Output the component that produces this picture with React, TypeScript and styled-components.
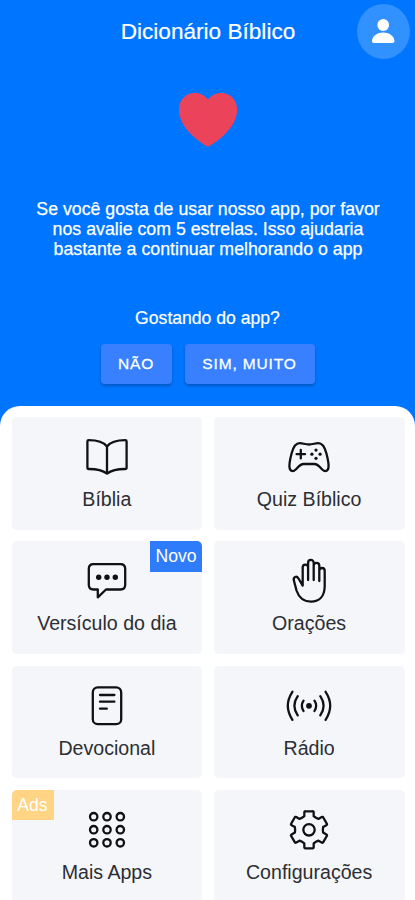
import React from "react";
import styled, { createGlobalStyle } from "styled-components";

const GlobalStyle = createGlobalStyle`
  * { box-sizing: border-box; }
  body { margin: 0; background: #fff; overflow: hidden; }
`;

const Screen = styled.div`
  width: 100%;
  height: 900px;
  overflow: hidden;
  background: #0075ff;
  font-family: "Liberation Sans", Arial, sans-serif;
  color: #fff;
  display: flex;
  flex-direction: column;
`;

const TopBar = styled.header`
  height: 64px;
  flex: none;
  display: grid;
  grid-template-columns: 58px 1fr 58px;
  padding-top: 4px;
`;

const Title = styled.h1`
  grid-column: 2;
  margin: 0;
  padding-left: 1px;
  text-align: center;
  font-size: 22.6px;
  font-weight: 400;
  line-height: 55px;
  -webkit-text-stroke: 0.2px #fff;
`;

const Avatar = styled.button`
  width: 53px;
  height: 55px;
  padding: 0;
  border: 0;
  border-radius: 50%;
  background: #3091ff;
`;

const Hero = styled.section`
  height: 341.5px;
  flex: none;
  display: flex;
  flex-direction: column;
  align-items: center;
  padding-top: 28px;
`;

const HeartIcon = styled.svg`
  width: 60px;
  height: 56px;
  flex: none;
  margin-left: 1px;
`;

const Message = styled.p`
  margin: 51px 0 0 1px;
  width: 361px;
  text-align: center;
  font-size: 17.75px;
  line-height: 20px;
  -webkit-text-stroke: 0.25px #fff;
`;

const Question = styled.p`
  margin: 49px 0 0;
  font-size: 17.6px;
  line-height: 20px;
  -webkit-text-stroke: 0.2px #fff;
`;

const Answers = styled.div`
  display: flex;
  gap: 13px;
  margin-top: 15.5px;
`;

const Answer = styled.button<{ $width: number }>`
  width: ${(p) => p.$width}px;
  height: 40px;
  padding: 0;
  border: 0;
  border-radius: 4px;
  background: #3880ff;
  color: #fff;
  font: 400 15.5px/40px "Liberation Sans", Arial, sans-serif;
  letter-spacing: 0.85px;
  -webkit-text-stroke: 0.3px #fff;
  box-shadow: 0 2px 3px rgba(0, 0, 0, 0.24);
`;

const Panel = styled.main`
  flex: 1;
  min-height: 0;
  background: #fff;
  border-radius: 20px 20px 0 0;
  padding: 11.5px 10.5px 0 11.5px;
`;

const Grid = styled.div`
  display: grid;
  grid-template-columns: 1fr 1fr;
  grid-auto-rows: 112.75px;
  gap: 11.5px;
`;

const Tile = styled.div`
  position: relative;
  overflow: hidden;
  border-radius: 5px;
  background: #f4f6fa;
  display: flex;
  flex-direction: column;
  align-items: center;
  padding-top: 16px;
`;

const Icon = styled.svg`
  width: 48px;
  height: 48px;
  flex: none;
  fill: none;
  stroke: #101114;
  stroke-width: 2.3;
  stroke-linecap: round;
  stroke-linejoin: round;
`;

const Label = styled.span`
  margin-top: 6.2px;
  font-size: 19.6px;
  line-height: 24px;
  color: #2c2e33;
  white-space: nowrap;
`;

const Badge = styled.span<{ $side: "left" | "right" }>`
  position: absolute;
  top: 0;
  ${(p) => p.$side}: 0;
  width: ${(p) => (p.$side === "right" ? 52.5 : 42)}px;
  height: 30.5px;
  text-align: center;
  font-size: 17.6px;
  line-height: 30px;
  color: #fff;
  background: ${(p) => (p.$side === "right" ? "#2f7cfb" : "#ffd485")};
`;

const Solid = styled.g`
  fill: #101114;
  stroke: none;
`;

const gearPath = (() => {
  const at = (r: number, deg: number) => {
    const a = ((deg - 90) * Math.PI) / 180;
    return `${(24 + r * Math.cos(a)).toFixed(2)} ${(23.8 + r * Math.sin(a)).toFixed(2)}`;
  };
  let d = "";
  for (let k = 0; k < 6; k++) {
    const c = k * 60;
    d += `${k ? "L" : "M"}${at(14.4, c - 19)}L${at(18, c - 15)}Q${at(19.3, c - 14)} ${at(18.8, c - 10)}`;
    d += `L${at(18.8, c + 10)}Q${at(19.3, c + 14)} ${at(18, c + 15)}L${at(14.4, c + 19)}Q${at(13.6, c + 30)} ${at(14.4, c + 41)}`;
  }
  return d + "Z";
})();

const Book = () => (
  <Icon viewBox="0 0 48 48">
    <path d="M24 13.5C20.5 9 14 7.2 5.7 7.2Q4.4 7.2 4.4 8.5V34.5Q4.4 36 5.9 36C14 36 19 36.8 24 40.7C29 36.8 34 36 42.1 36Q43.6 36 43.6 34.5V8.5Q43.6 7.2 42.3 7.2C34 7.2 27.5 9 24 13.5V40.7" />
  </Icon>
);

const Gamepad = () => (
  <Icon viewBox="0 0 48 48">
    <path d="M24 11.5C20 11.5 18 10.1 14.7 10.1C10.3 10.1 8.3 14 6.7 20C5.1 26 4.1 31 4.5 34.3C5 38.6 8.2 39 10.7 36.5C13.3 33.9 15 31 18.7 31H29.3C33 31 34.7 33.9 37.3 36.5C39.8 39 43 38.6 43.5 34.3C43.9 31 42.9 26 41.3 20C39.7 14 37.7 10.1 33.3 10.1C30 10.1 28 11.5 24 11.5Z" />
    <path d="M15.8 17V25.4M11.6 21.2H20" />
    <Solid>
      <circle cx="31" cy="17.1" r="1.6" />
      <circle cx="31" cy="25.3" r="1.6" />
      <circle cx="26.9" cy="21.2" r="1.6" />
      <circle cx="35.1" cy="21.2" r="1.6" />
    </Solid>
  </Icon>
);

const Bubble = () => (
  <Icon viewBox="0 0 48 48">
    <path d="M10.5 7.1H37.5Q42.2 7.1 42.2 11.8V27.8Q42.2 32.5 37.5 32.5H23L14.8 40.3V32.5H10.5Q5.8 32.5 5.8 27.8V11.8Q5.8 7.1 10.5 7.1Z" />
    <Solid>
      <circle cx="15.7" cy="20.2" r="2.7" />
      <circle cx="24" cy="20.2" r="2.7" />
      <circle cx="32.3" cy="20.2" r="2.7" />
    </Solid>
  </Icon>
);

const Hand = () => (
  <Icon viewBox="0 0 48 48">
    <path d="M17.7 28.6V10.3a2.7 2.7 0 0 1 5.4 0V23M23.1 10.3V5.7a2.8 2.8 0 0 1 5.6 0V23M28.7 8.6a2.8 2.8 0 0 1 5.6 0V24M34.3 13.7a2.7 2.7 0 0 1 5.4 0V29C39.7 40 33.5 44.6 26 44.6C17.5 44.6 13.5 39.5 11.5 33.5L8.9 23.5C7.9 19.7 11.7 18.5 13.5 21.5L17.7 28.6" />
  </Icon>
);

const Reader = () => (
  <Icon viewBox="0 0 48 48">
    <rect x="9.8" y="5.4" width="28.4" height="36.8" rx="5" />
    <path d="M17 13H31.4M17 19.7H31.4M17 26.7H23.8" />
  </Icon>
);

const Radio = () => (
  <Icon viewBox="0 0 48 48">
    <path d="M18.5 18.6Q15.2 23.8 18.5 29M29.5 18.6Q32.8 23.8 29.5 29M12.7 14.2Q6.1 23.8 12.7 33.4M35.3 14.2Q41.9 23.8 35.3 33.4M7.4 9.8Q-1.8 23.8 7.4 37.8M40.6 9.8Q49.8 23.8 40.6 37.8" />
    <Solid>
      <circle cx="24" cy="23.8" r="2.9" />
    </Solid>
  </Icon>
);

const Apps = () => (
  <Icon viewBox="0 0 48 48">
    {[10.7, 23.7, 36.8].map((y) =>
      [10.7, 24, 37.3].map((x) => <circle key={`${x}-${y}`} cx={x} cy={y} r="3.7" />)
    )}
  </Icon>
);

const Gear = () => (
  <Icon viewBox="0 0 48 48">
    <path d={gearPath} />
    <circle cx="24" cy="23.8" r="5.7" />
  </Icon>
);

type Item = {
  label: string;
  icon: React.ComponentType;
  badge?: { text: string; side: "left" | "right" };
};

const items: Item[] = [
  { label: "Bíblia", icon: Book },
  { label: "Quiz Bíblico", icon: Gamepad },
  { label: "Versículo do dia", icon: Bubble, badge: { text: "Novo", side: "right" } },
  { label: "Orações", icon: Hand },
  { label: "Devocional", icon: Reader },
  { label: "Rádio", icon: Radio },
  { label: "Mais Apps", icon: Apps, badge: { text: "Ads", side: "left" } },
  { label: "Configurações", icon: Gear },
];

export default function App() {
  return (
    <>
      <GlobalStyle />
      <Screen>
        <TopBar>
          <Title>Dicionário Bíblico</Title>
          <Avatar aria-label="Perfil">
            <svg width="53" height="55" viewBox="0 0 53 55" fill="#fff">
              <circle cx="26.2" cy="21" r="5.9" />
              <path d="M15 37.2C15.2 31.5 20.7 28.6 26.2 28.6C31.7 28.6 37.2 31.5 37.4 37.2Q37.4 39 35.6 39H16.8Q15 39 15 37.2Z" />
            </svg>
          </Avatar>
        </TopBar>
        <Hero>
          <HeartIcon viewBox="0 0 60 56" fill="#eb445a">
            <path d="M30 7.6C26.5 3 21.5 1.1 16.5 1.1C7.5 1.1 0.9 8.5 0.9 17.5C0.9 34 16.5 46.5 27.8 53.8Q30 55.2 32.2 53.8C43.5 46.5 59.1 34 59.1 17.5C59.1 8.5 52.5 1.1 43.5 1.1C38.5 1.1 33.5 3 30 7.6Z" />
          </HeartIcon>
          <Message>
            Se você gosta de usar nosso app, por favor
            <br />
            nos avalie com 5 estrelas. Isso ajudaria
            <br />
            bastante a continuar melhorando o app
          </Message>
          <Question>Gostando do app?</Question>
          <Answers>
            <Answer $width={71}>NÃO</Answer>
            <Answer $width={130}>SIM, MUITO</Answer>
          </Answers>
        </Hero>
        <Panel>
          <Grid>
            {items.map(({ label, icon: Glyph, badge }) => (
              <Tile key={label}>
                {badge && <Badge $side={badge.side}>{badge.text}</Badge>}
                <Glyph />
                <Label>{label}</Label>
              </Tile>
            ))}
          </Grid>
        </Panel>
      </Screen>
    </>
  );
}
